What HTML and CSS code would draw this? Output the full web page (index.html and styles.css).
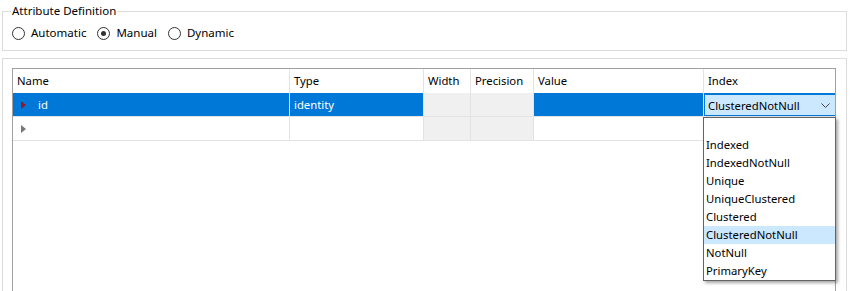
FILE: index.html
```html
<!DOCTYPE html>
<html lang="en">
<head>
    <meta charset="UTF-8">
    <title>Attribute Definition</title>
    <link rel="stylesheet" href="styles.css">
</head>
<body>
    <fieldset class="group">
        <legend>Attribute Definition</legend>
        <div class="radios">
            <label class="radio"><span class="dot"></span>Automatic</label>
            <label class="radio checked"><span class="dot"></span>Manual</label>
            <label class="radio"><span class="dot"></span>Dynamic</label>
        </div>
    </fieldset>

    <div class="panel">
        <div class="grid">
            <div class="row head">
                <div class="cell">Name</div>
                <div class="cell">Type</div>
                <div class="cell">Width</div>
                <div class="cell">Precision</div>
                <div class="cell">Value</div>
                <div class="cell">Index</div>
            </div>
            <div class="row selected">
                <div class="cell name"><span class="marker red"></span>id</div>
                <div class="cell">identity</div>
                <div class="cell ro"></div>
                <div class="cell ro"></div>
                <div class="cell"></div>
                <div class="cell combo">ClusteredNotNull
                    <svg class="chev" width="9" height="5" viewBox="0 0 9 5"><path d="M0.5 0.5 L4.5 4.5 L8.5 0.5" fill="none" stroke="#444" stroke-width="1"/></svg>
                </div>
            </div>
            <div class="row">
                <div class="cell name"><span class="marker"></span></div>
                <div class="cell"></div>
                <div class="cell ro"></div>
                <div class="cell ro"></div>
                <div class="cell"></div>
                <div class="cell"></div>
            </div>

            <ul class="dropdown">
                <li>&nbsp;</li>
                <li>Indexed</li>
                <li>IndexedNotNull</li>
                <li>Unique</li>
                <li>UniqueClustered</li>
                <li>Clustered</li>
                <li class="hover">ClusteredNotNull</li>
                <li>NotNull</li>
                <li>PrimaryKey</li>
            </ul>
        </div>
    </div>
</body>
</html>
```

FILE: styles.css
```css
body {
    margin: 0;
    padding: 0 3px 0 2px;
    background: white;
    font-family: "Noto Sans", "Open Sans", sans-serif;
    font-size: 11.3px;
    color: #000;
    overflow: hidden;
    height: 291px;
}
.group {
    margin: 0;
    padding: 0 0 0 9px;
    height: 46px;
    border: 1px solid #dcdcdc;
    border-radius: 0;
    box-sizing: border-box;
    margin-top: 5px;
}
.group legend {
    padding: 0 1px;
    margin-left: -1px;
    line-height: 12px;
    font-size: 11.5px;
}
.radios {
    display: flex;
    margin-top: 8px;
    font-size: 11.5px;
}
.radio {
    display: flex;
    align-items: center;
    margin-right: 11px;
    line-height: 16px;
}
.dot {
    width: 11px;
    height: 11px;
    border: 1px solid #333;
    border-radius: 50%;
    margin-right: 6px;
    position: relative;
}
.radio.checked .dot::after {
    content: "";
    position: absolute;
    left: 3px;
    top: 3px;
    width: 5px;
    height: 5px;
    border-radius: 50%;
    background: #333;
}
.panel {
    margin-top: 7px;
    border: 1px solid #dcdcdc;
    border-bottom: none;
    height: 223px;
    padding: 9px 10px 0 9px;
    overflow: hidden;
}
.grid {
    position: relative;
    border-top: 1px solid #a0a0a0;
    border-left: 1px solid #a0a0a0;
    border-right: 1px solid #a0a0a0;
    height: 222px;
}
.row {
    display: grid;
    grid-template-columns: 277px 134px 47px 63px 170px 1fr;
    height: 24px;
    border-bottom: 1px solid #e3e3e3;
    box-sizing: border-box;
}
.head {
    border-bottom: none;
}
.cell {
    border-right: 1px solid #e3e3e3;
    padding-left: 4px;
    line-height: 24px;
    white-space: nowrap;
    overflow: hidden;
}
.cell:last-child {
    border-right: none;
}
.selected {
    background: #0078d7;
    color: white;
}
.ro {
    background: #f0f0f0;
}
.name {
    display: flex;
    align-items: center;
    padding-left: 8px;
}
.marker {
    width: 0;
    height: 0;
    border-top: 4px solid transparent;
    border-bottom: 4px solid transparent;
    border-left: 5px solid #777;
    margin-right: 12px;
}
.marker.red {
    border-left-color: #8b1a32;
}
.combo {
    position: relative;
    background: #cce8ff;
    color: #000;
    border: 1px solid #0078d7;
    margin-top: 1px;
    line-height: 21px;
    padding-left: 3px;
    height: 22px;
    box-sizing: border-box;
}
.chev {
    position: absolute;
    right: 5px;
    top: 8px;
}
.dropdown {
    position: absolute;
    left: 690px;
    top: 48px;
    width: 131px;
    margin: 0;
    padding: 0;
    list-style: none;
    background: white;
    border: 1px solid #646464;
    box-shadow: 2px 2px 3px rgba(0, 0, 0, 0.35);
}
.dropdown li {
    height: 18px;
    line-height: 18px;
    padding-left: 2px;
}
.dropdown li.hover {
    background: #cce8ff;
}
```
